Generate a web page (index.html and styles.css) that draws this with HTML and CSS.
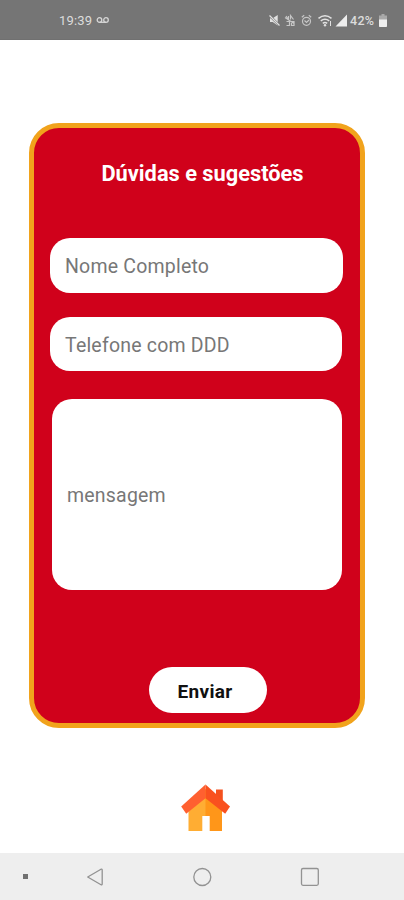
FILE: index.html
```html
<!DOCTYPE html>
<html lang="pt-BR">
<head>
<meta charset="utf-8">
<title>Dúvidas e sugestões</title>
<link rel="stylesheet" href="styles.css">
</head>
<body>
<header class="status">
  <div class="status-left">
    <span class="clock">19:39</span>
    <svg class="voicemail" width="14" height="8" viewBox="0 0 14 8"><g fill="none" stroke="#d6d6d6" stroke-width="1.3"><circle cx="3.500" cy="4" r="2.300"/><circle cx="10" cy="4" r="2.300"/><path d="M3.500 6.300h6.500"/></g></svg>
  </div>
  <svg class="status-icons" width="80" height="16" viewBox="268 12 80 16">
    <path d="M270 18.200h2.700l5-3.200v10.500l-5-3.500H270z" fill="#e2e2e2"/>
    <path d="M269.500 15.500l10 10" stroke="#757575" stroke-width="2.400"/>
    <path d="M269.500 15.500l10 10" stroke="#dedede" stroke-width="1.300"/>
    <g fill="none" stroke="#c6c6c6" stroke-width="1.200">
      <path d="M286 16l2.500 3.500v-3.500M290.500 19.500v-4l3 4M286.500 21.500h3v4h-3M291.500 21.500h2.500v4h-2.500zM285 17.500l9 6"/>
      <circle cx="306.500" cy="21.300" r="4"/>
      <path d="M301.800 17.300l2.400-2M311.200 17.300l-2.400-2M304.500 20.500l2 2 2.500-2.500"/>
    </g>
    <g fill="none" stroke="#e2e2e2" stroke-width="1.600">
      <path d="M318.500 18.300q6.500-5 13 0M320.800 20.900q4.200-3.200 8.400 0M322.800 23.300q2.200-1.600 4.400 0"/>
      <path d="M330.500 21v5" stroke-width="1"/>
    </g>
    <circle cx="325" cy="25.300" r="1.200" fill="#dedede"/>
    <path d="M335.500 26.500h11.500V14.500z" fill="#ededed"/>
  </svg>
  <span class="percent">42%</span>
  <svg class="battery" width="8" height="13" viewBox="0 0 8 13"><path d="M2.500 0h3v1.500H8V12a1 1 0 0 1-1 1H1a1 1 0 0 1-1-1V1.500h2.500z" fill="#a9a9a9"/><path d="M0 5.500h8V12a1 1 0 0 1-1 1H1a1 1 0 0 1-1-1z" fill="#efefef"/></svg>
</header>

<main class="screen">
  <form class="card">
    <h1 class="title">Dúvidas e sugestões</h1>
    <label class="field name"><span>Nome Completo</span></label>
    <label class="field phone"><span>Telefone com DDD</span></label>
    <label class="field message"><span>mensagem</span></label>
    <button class="send" type="button">Enviar</button>
  </form>
  <svg class="home" width="50" height="48" viewBox="181 784 50 48">
    <path d="M188.500 804L206 789v42h-17.500z" fill="#ffad33"/>
    <path d="M205.500 789L222 804v27h-16.500z" fill="#ff9619"/>
    <path d="M202.300 816h7.400v15.500h-7.400z" fill="#fff"/>
    <path d="M216 789.500h6.800v11H216z" fill="#f4511e"/>
    <path d="M205.500 784.500v13.700l-19.300 15.600-5-7.300z" fill="#ff6030"/>
    <path d="M205.500 784.500l24.500 22-4.800 7.300-19.700-15.600z" fill="#f9511f"/>
  </svg>
</main>

<nav class="navbar">
  <i class="dot"></i>
  <svg width="310" height="24" viewBox="85 865 310 24"><g fill="none" stroke="#929292" stroke-width="1.300" stroke-linejoin="round"><path d="M87.700 877L101 869.200q1.200-.4 1.200 1v13.600q0 1.400-1.200.9z"/><circle cx="202.300" cy="877" r="8.500"/><rect x="301.500" y="868.500" width="16.800" height="16.800" rx="1.500"/></g></svg>
</nav>
</body>
</html>
```
FILE: styles.css
```css
* {
  box-sizing: border-box;
}

body {
  margin: 0;
  width: 404px;
  height: 900px;
  display: flex;
  flex-direction: column;
  overflow: hidden;
  background: #fff;
  font-family: Roboto, "Liberation Sans", sans-serif;
}

.status {
  height: 40px;
  flex: none;
  display: flex;
  align-items: center;
  padding-left: 59px;
  background: #757575;
  border-bottom: 1px solid #707070;
  color: #dcdcdc;
}

.status-left {
  width: 209px;
  display: flex;
  align-items: center;
  gap: 4px;
}

.clock {
  font-size: 13px;
  letter-spacing: 0.2px;
  line-height: 16px;
  padding-top: 2px;
}

.percent {
  margin-left: 2px;
  width: 25px;
  font-size: 12.5px;
  letter-spacing: 0.3px;
  font-weight: 500;
  line-height: 16px;
  padding-top: 2px;
}

.battery {
  margin-left: 4px;
  margin-top: 1px;
}

.screen {
  flex: 1;
  display: flex;
  flex-direction: column;
  padding: 83px 0 0 29px;
}

.card {
  width: 336px;
  height: 605px;
  display: flex;
  flex-direction: column;
  padding: 33px 16px 0;
  border: 5px solid #f1a31c;
  border-radius: 30px;
  background: #d0011b;
}

.title {
  flex: none;
  margin: 0 0 51px 11px;
  text-align: center;
  font-size: 21.8px;
  line-height: 26px;
  font-weight: 700;
  color: #fff;
}

.field {
  flex: none;
  display: flex;
  align-items: center;
  padding: 2px 0 0 15px;
  border-radius: 20px;
  background: #fff;
  color: #777;
  font-size: 19.5px;
  letter-spacing: 0.2px;
}

.name {
  width: 293px;
  height: 55px;
}

.phone {
  width: 292px;
  height: 54px;
  margin-top: 24px;
  padding-top: 3px;
}

.message {
  width: 290px;
  height: 191px;
  margin: 28px 0 0 2px;
}

.send {
  flex: none;
  width: 118px;
  height: 46px;
  margin: 77px 0 0 99px;
  padding: 2px 6px 0 0;
  border: 0;
  border-radius: 23px;
  background: #fff;
  color: #111;
  font: 700 19px Roboto, sans-serif;
  letter-spacing: 0.3px;
}

.home {
  margin: 56px 0 0 152px;
}

.navbar {
  height: 47px;
  flex: none;
  display: flex;
  align-items: center;
  padding-left: 23px;
  background: #eee;
}

.dot {
  width: 5px;
  height: 5px;
  margin-right: 57px;
  background: #707070;
}
```
